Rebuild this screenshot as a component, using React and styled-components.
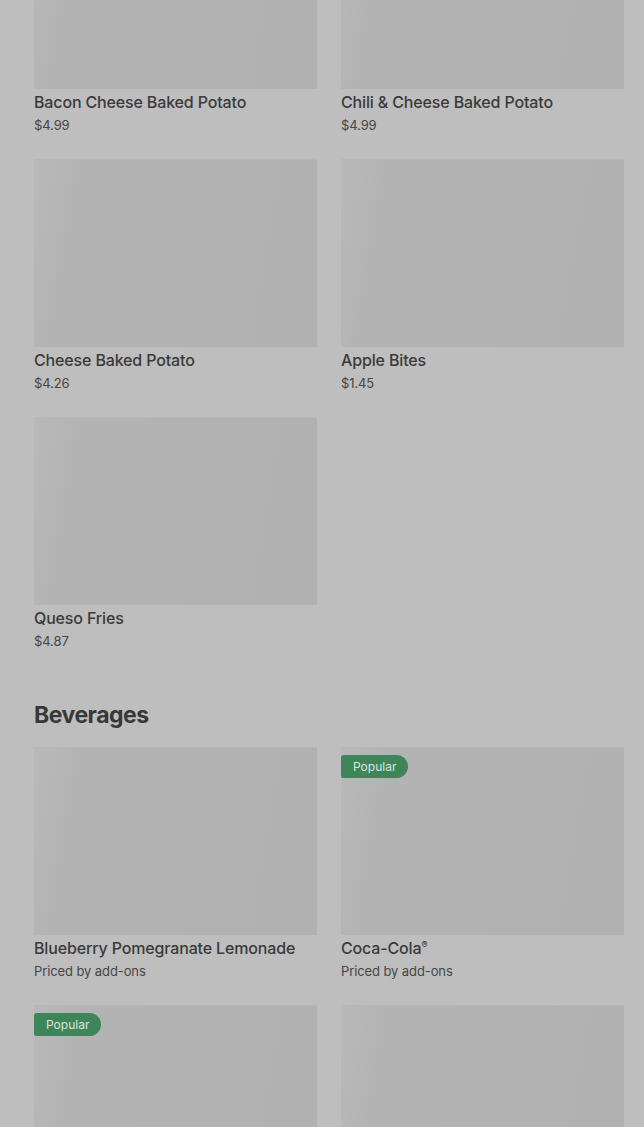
import React from "react";
import styled, { createGlobalStyle } from "styled-components";

const Global = createGlobalStyle`
  html, body { margin: 0; padding: 0; background: #bebebe; }
  body { font-family: Inter, "Noto Sans", Arial, sans-serif; overflow: hidden; }
`;

const Page = styled.main`
  padding: 0 20px 0 34px;
  margin-top: -99px;
  display: flex;
  flex-direction: column;
  gap: 47px;
`;

const Section = styled.section`
  display: flex;
  flex-direction: column;
`;

const Heading = styled.h2`
  margin: 1px 0 16px;
  font-size: 23px;
  line-height: 32px;
  font-weight: 700;
  letter-spacing: -0.5px;
  color: #383838;
`;

const Grid = styled.div`
  display: grid;
  grid-template-columns: 283px 283px;
  column-gap: 24px;
  row-gap: 24px;
`;

const Card = styled.article`
  display: flex;
  flex-direction: column;
  position: relative;
`;

const Thumb = styled.div`
  height: 188px;
  background: linear-gradient(100deg, #b9b9b9 0%, #b7b7b7 6%, #b3b3b3 16%, #b1b1b1 100%);
  box-shadow: inset 0 1px 0 #b7b7b7;
`;

const Badge = styled.span`
  position: absolute;
  top: 8px;
  left: 0;
  height: 23px;
  padding: 0 12px;
  display: flex;
  align-items: center;
  background: #3e855a;
  color: #dce5df;
  font-size: 12px;
  border-radius: 3px 12px 12px 3px;
`;

const Title = styled.div`
  margin-top: 1px;
  font-size: 16px;
  line-height: 24px;
  font-weight: 500;
  letter-spacing: -0.15px;
  color: #3a3a3a;
  white-space: nowrap;
`;

const Reg = styled.sup`
  font-size: 9px;
  line-height: 0;
  vertical-align: 6px;
`;

const Sub = styled.div`
  margin-top: 1px;
  font-size: 13px;
  line-height: 20px;
  letter-spacing: -0.1px;
  color: #464646;
`;

const food = [
  { name: "Bacon Cheese Baked Potato", price: "$4.99" },
  { name: "Chili & Cheese Baked Potato", price: "$4.99" },
  { name: "Cheese Baked Potato", price: "$4.26" },
  { name: "Apple Bites", price: "$1.45" },
  { name: "Queso Fries", price: "$4.87" },
];

const drinks = [
  { name: "Blueberry Pomegranate Lemonade", price: "Priced by add-ons" },
  { name: "Coca-Cola", reg: true, price: "Priced by add-ons", popular: true },
  { name: "", price: "", popular: true },
  { name: "", price: "" },
];

function Item({ item }) {
  return (
    <Card>
      <Thumb />
      {item.popular && <Badge>Popular</Badge>}
      {item.name && (
        <Title>
          {item.name}
          {item.reg && <Reg>®</Reg>}
        </Title>
      )}
      {item.price && <Sub>{item.price}</Sub>}
    </Card>
  );
}

export default function App() {
  return (
    <>
      <Global />
      <Page>
        <Section>
          <Grid>
            {food.map((f, i) => (
              <Item key={i} item={f} />
            ))}
          </Grid>
        </Section>
        <Section>
          <Heading>Beverages</Heading>
          <Grid>
            {drinks.map((d, i) => (
              <Item key={i} item={d} />
            ))}
          </Grid>
        </Section>
      </Page>
    </>
  );
}
